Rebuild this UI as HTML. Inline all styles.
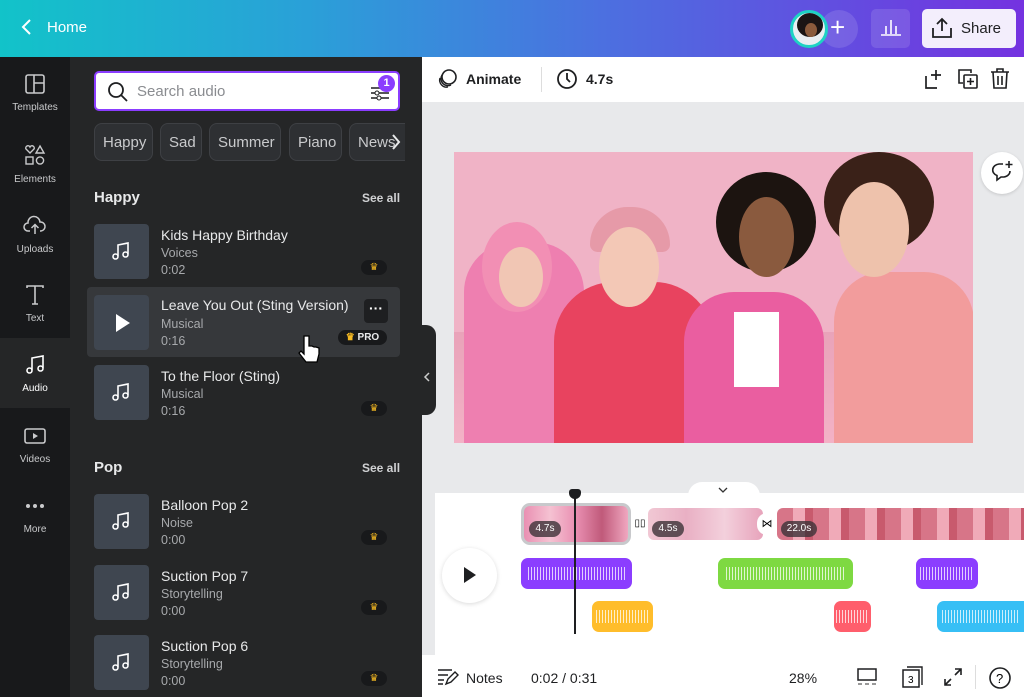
<!DOCTYPE html>
<html><head><meta charset="utf-8"><style>
*{margin:0;padding:0;box-sizing:border-box}
body{width:1024px;height:697px;overflow:hidden;font-family:"Liberation Sans",sans-serif;background:#e8e9eb;position:relative}
.abs{position:absolute}
#hdr{left:0;top:0;width:1024px;height:57px;background:linear-gradient(90deg,#12c3c9 0%,#2aa0d8 30%,#4d6ee0 60%,#7432e0 100%)}
#side{left:0;top:57px;width:70px;height:640px;background:#18191b}
.si{position:absolute;left:0;width:70px;height:70px;color:#c9cacc;font-size:10px;text-align:center}
.si svg{display:block;margin:17px auto 8px}
#panel{left:70px;top:57px;width:352px;height:640px;background:#252627}
.chip{position:absolute;top:123px;height:38px;border:1px solid #3e4044;background:#2e3033;border-radius:8px;color:#c9cacc;font-size:15px;line-height:38px;padding:0 8px}
.thumb{position:absolute;left:94px;width:55px;height:55px;background:#3f4650;border-radius:4px}
.t1{position:absolute;left:161px;color:#e8e9ea;font-size:14px}
.t2{position:absolute;left:161px;color:#a7a9ac;font-size:12.5px}
.crown{position:absolute;left:361px;width:26px;height:15px;border-radius:8px;background:#18191b;color:#f5b922;font-size:10px;text-align:center;line-height:15px}
.sec{position:absolute;left:94px;color:#e8e9ea;font-weight:bold;font-size:15px}
.see{position:absolute;left:362px;color:#d0d1d3;font-weight:bold;font-size:12px}
.trk{position:absolute;border-radius:7px;overflow:hidden}
.trk::after{content:"";position:absolute;left:6%;right:6%;top:30%;bottom:30%;background:repeating-linear-gradient(90deg,rgba(255,255,255,.75) 0 1px,transparent 1px 3px)}
.bb{position:absolute;top:670px;font-size:14px;color:#1e1f21}
</style></head><body>
<div id="hdr" class="abs">
 <svg class="abs" style="left:20px;top:18px" width="14" height="18"><path d="M10 2L3 9l7 7" stroke="#fff" stroke-width="2" fill="none"/></svg>
 <div class="abs" style="left:47px;top:19px;color:#fff;font-size:15px">Home</div>
 <div class="abs" style="left:820px;top:10px;width:38px;height:38px;border-radius:50%;background:rgba(255,255,255,.12)"></div>
 <div class="abs" style="left:790px;top:10px;width:38px;height:38px;border-radius:50%;background:#e9eef2;border:3px solid #1ed2c4;overflow:hidden"><div style="position:absolute;left:4px;top:0;width:26px;height:24px;border-radius:50%;background:#1a1414"></div><div style="position:absolute;left:12px;top:10px;width:12px;height:14px;border-radius:50%;background:#8a5a3c"></div></div>
 <div class="abs" style="left:830px;top:12px;color:#fff;font-size:26px;line-height:30px">+</div>
 <div class="abs" style="left:871px;top:9px;width:39px;height:39px;border-radius:5px;background:rgba(255,255,255,.12)"></div>
 <svg class="abs" style="left:880px;top:17px" width="22" height="20"><path d="M1 18h20M6 17V9M11 17V3M16 17V9" stroke="#fff" stroke-width="1.6"/></svg>
 <div class="abs" style="left:922px;top:9px;width:94px;height:39px;border-radius:5px;background:#f3eefc"></div>
 <svg class="abs" style="left:931px;top:17px" width="22" height="22"><path d="M11 14V2M6 7l5-5 5 5M2 11v9h18v-9" stroke="#1e1f21" stroke-width="1.8" fill="none"/></svg>
 <div class="abs" style="left:961px;top:20px;color:#1e1f21;font-size:15px">Share</div>
</div>
<div id="side" class="abs">
 <div class="si" style="top:0"><svg width="20" height="20"><rect x="1" y="1" width="18" height="18" rx="2" fill="none" stroke="#c9cacc" stroke-width="1.6"/><path d="M9 1v18M9 9h10" stroke="#c9cacc" stroke-width="1.6"/></svg>Templates</div>
 <div class="si" style="top:70px"><svg width="22" height="22"><path d="M6 9L2 5a2 2 0 014-2 2 2 0 014 2z" fill="none" stroke="#c9cacc" stroke-width="1.4"/><path d="M16 2l4 7h-8z" fill="none" stroke="#c9cacc" stroke-width="1.4"/><rect x="2" y="13" width="7" height="7" fill="none" stroke="#c9cacc" stroke-width="1.4"/><circle cx="16" cy="16.5" r="3.6" fill="none" stroke="#c9cacc" stroke-width="1.4"/></svg>Elements</div>
 <div class="si" style="top:140px"><svg width="24" height="22"><path d="M7 17H5a4 4 0 010-8 6 6 0 0112-1 4.5 4.5 0 011 9h-1M12 20v-9M8.5 14l3.5-3.5 3.5 3.5" fill="none" stroke="#c9cacc" stroke-width="1.5"/></svg>Uploads</div>
 <div class="si" style="top:211px"><svg width="20" height="20"><path d="M2 3V1h16v2M10 1v18M7 19h6" fill="none" stroke="#c9cacc" stroke-width="1.6"/></svg>Text</div>
 <div class="si" style="top:281px;background:#252627;color:#fff"><svg width="20" height="20"><path d="M7 15V3l11-2v12" fill="none" stroke="#fff" stroke-width="1.6"/><circle cx="4.5" cy="15.5" r="2.5" fill="none" stroke="#fff" stroke-width="1.6"/><circle cx="15.5" cy="13.5" r="2.5" fill="none" stroke="#fff" stroke-width="1.6"/></svg>Audio</div>
 <div class="si" style="top:352px"><svg width="22" height="20"><rect x="1" y="3" width="20" height="14" rx="2" fill="none" stroke="#c9cacc" stroke-width="1.6"/><path d="M9 7v6l5-3z" fill="#c9cacc"/></svg>Videos</div>
 <div class="si" style="top:422px"><svg width="22" height="20"><circle cx="4" cy="10" r="2" fill="#c9cacc"/><circle cx="11" cy="10" r="2" fill="#c9cacc"/><circle cx="18" cy="10" r="2" fill="#c9cacc"/></svg>More</div>
</div>
<div id="panel" class="abs"></div>
<div class="abs" style="left:94px;top:71px;width:306px;height:40px;background:#fff;border:2px solid #8b3dff;border-radius:5px"></div>
<svg class="abs" style="left:107px;top:81px" width="22" height="22"><circle cx="9" cy="9" r="7" fill="none" stroke="#1e1f21" stroke-width="1.8"/><path d="M14 14l6 6" stroke="#1e1f21" stroke-width="1.8"/></svg>
<div class="abs" style="left:137px;top:83px;color:#8a8c90;font-size:15px">Search audio</div>
<svg class="abs" style="left:370px;top:80px" width="20" height="22"><path d="M1 8h18M1 13h18M1 18h18" stroke="#1e1f21" stroke-width="1.4"/><circle cx="13" cy="8" r="2" fill="#fff" stroke="#1e1f21"/><circle cx="7" cy="13" r="2" fill="#fff" stroke="#1e1f21"/><circle cx="9" cy="18" r="2" fill="#fff" stroke="#1e1f21"/></svg>
<div class="abs" style="left:378px;top:75px;width:17px;height:17px;border-radius:50%;background:#8b3dff;color:#fff;font-size:11px;text-align:center;line-height:17px;font-weight:bold">1</div>
<div class="chip" style="left:94px;width:59px">Happy</div>
<div class="chip" style="left:160px;width:42px">Sad</div>
<div class="chip" style="left:209px;width:72px">Summer</div>
<div class="chip" style="left:289px;width:53px">Piano</div>
<div class="chip" style="left:349px;width:56px;border-right:none;border-radius:8px 0 0 8px">News</div>
<svg class="abs" style="left:391px;top:133px" width="10" height="18"><path d="M2 2l6 7-6 7" stroke="#e8e9ea" stroke-width="2" fill="none"/></svg>
<div class="sec" style="top:189px">Happy</div><div class="see" style="top:191px">See all</div>
<div class="abs" style="left:87px;top:287px;width:313px;height:70px;background:#36383b;border-radius:4px"></div>
<div class="thumb" style="top:224px"></div><div class="thumb" style="top:295px"></div><div class="thumb" style="top:365px"></div>
<div class="t1" style="top:227px">Kids Happy Birthday</div><div class="t2" style="top:246px">Voices</div><div class="t2" style="top:263px">0:02</div>
<div class="t1" style="top:297px">Leave You Out (Sting Version)</div><div class="t2" style="top:317px">Musical</div><div class="t2" style="top:334px">0:16</div>
<div class="t1" style="top:368px">To the Floor (Sting)</div><div class="t2" style="top:387px">Musical</div><div class="t2" style="top:404px">0:16</div>
<div class="crown" style="top:260px">♛</div><div class="crown" style="top:401px">♛</div>
<div class="crown" style="top:330px;left:338px;width:49px;color:#e8e9ea;font-weight:bold"><span style="color:#f5b922">♛</span> PRO</div>
<div class="abs" style="left:364px;top:299px;width:24px;height:24px;background:#1e1f21;border-radius:4px;color:#fff;text-align:center;font-size:14px;line-height:18px;font-weight:bold">···</div>
<div class="sec" style="top:459px">Pop</div><div class="see" style="top:461px">See all</div>
<div class="thumb" style="top:494px"></div><div class="thumb" style="top:565px"></div><div class="thumb" style="top:635px"></div>
<div class="t1" style="top:497px">Balloon Pop 2</div><div class="t2" style="top:516px">Noise</div><div class="t2" style="top:533px">0:00</div>
<div class="t1" style="top:568px">Suction Pop 7</div><div class="t2" style="top:587px">Storytelling</div><div class="t2" style="top:604px">0:00</div>
<div class="t1" style="top:638px">Suction Pop 6</div><div class="t2" style="top:657px">Storytelling</div><div class="t2" style="top:674px">0:00</div>
<div class="crown" style="top:530px">♛</div><div class="crown" style="top:600px">♛</div><div class="crown" style="top:671px">♛</div>
<svg class="abs" style="left:110px;top:240px" width="22" height="22"><path d="M8 16V5l10-2v11" fill="none" stroke="#fff" stroke-width="1.6"/><circle cx="5.5" cy="16.5" r="2.5" fill="none" stroke="#fff" stroke-width="1.6"/><circle cx="15.5" cy="14.5" r="2.5" fill="none" stroke="#fff" stroke-width="1.6"/></svg>
<svg class="abs" style="left:114px;top:313px" width="18" height="20"><path d="M2 1l14 9-14 9z" fill="#fff"/></svg>
<svg class="abs" style="left:110px;top:381px" width="22" height="22"><path d="M8 16V5l10-2v11" fill="none" stroke="#fff" stroke-width="1.6"/><circle cx="5.5" cy="16.5" r="2.5" fill="none" stroke="#fff" stroke-width="1.6"/><circle cx="15.5" cy="14.5" r="2.5" fill="none" stroke="#fff" stroke-width="1.6"/></svg>
<svg class="abs" style="left:110px;top:510px" width="22" height="22"><path d="M8 16V5l10-2v11" fill="none" stroke="#fff" stroke-width="1.6"/><circle cx="5.5" cy="16.5" r="2.5" fill="none" stroke="#fff" stroke-width="1.6"/><circle cx="15.5" cy="14.5" r="2.5" fill="none" stroke="#fff" stroke-width="1.6"/></svg>
<svg class="abs" style="left:110px;top:581px" width="22" height="22"><path d="M8 16V5l10-2v11" fill="none" stroke="#fff" stroke-width="1.6"/><circle cx="5.5" cy="16.5" r="2.5" fill="none" stroke="#fff" stroke-width="1.6"/><circle cx="15.5" cy="14.5" r="2.5" fill="none" stroke="#fff" stroke-width="1.6"/></svg>
<svg class="abs" style="left:110px;top:651px" width="22" height="22"><path d="M8 16V5l10-2v11" fill="none" stroke="#fff" stroke-width="1.6"/><circle cx="5.5" cy="16.5" r="2.5" fill="none" stroke="#fff" stroke-width="1.6"/><circle cx="15.5" cy="14.5" r="2.5" fill="none" stroke="#fff" stroke-width="1.6"/></svg>
<svg class="abs" style="left:296px;top:334px" width="26" height="32"><path d="M8 2v18l-3-3-2 2 7 9h11l2-8v-6l-3-1-2 0-2-1-3 0V2z" fill="#fff" stroke="#000" stroke-width="1.3"/></svg>
<div class="abs" style="left:422px;top:325px;width:14px;height:90px;background:#252627;border-radius:0 10px 10px 0"></div>
<svg class="abs" style="left:423px;top:371px" width="8" height="12"><path d="M6 2L2 6l4 4" stroke="#ccc" stroke-width="1.5" fill="none"/></svg>
<div class="abs" style="left:422px;top:57px;width:602px;height:45px;background:#fff"></div>
<svg class="abs" style="left:437px;top:68px" width="22" height="22"><circle cx="12" cy="9" r="7" fill="none" stroke="#1e1f21" stroke-width="1.6"/><path d="M5 7a7 7 0 009 10M3 10a7 7 0 008 9" fill="none" stroke="#1e1f21" stroke-width="1.4"/></svg>
<div class="abs" style="left:466px;top:71px;font-size:14px;font-weight:bold;color:#1e1f21">Animate</div>
<div class="abs" style="left:541px;top:67px;width:1px;height:25px;background:#ddd"></div>
<svg class="abs" style="left:556px;top:68px" width="22" height="22"><circle cx="11" cy="11" r="9" fill="none" stroke="#1e1f21" stroke-width="1.8"/><path d="M11 5v6l3 3" stroke="#1e1f21" stroke-width="1.8" fill="none"/></svg>
<div class="abs" style="left:586px;top:71px;font-size:14px;font-weight:bold;color:#1e1f21">4.7s</div>
<svg class="abs" style="left:924px;top:68px" width="20" height="22"><path d="M13 20H2V8M12 2v10M7 7h10" stroke="#1e1f21" stroke-width="1.7" fill="none"/></svg>
<svg class="abs" style="left:957px;top:68px" width="22" height="22"><path d="M14 5V2H2v13h4" stroke="#1e1f21" stroke-width="1.6" fill="none"/><rect x="7" y="7" width="13" height="13" rx="1" fill="none" stroke="#1e1f21" stroke-width="1.6"/><path d="M13.5 10v7M10 13.5h7" stroke="#1e1f21" stroke-width="1.6"/></svg>
<svg class="abs" style="left:990px;top:68px" width="20" height="22"><path d="M1 4h18M7 4V1h6v3M3 4l1 16h12l1-16M8 8v9M12 8v9" stroke="#1e1f21" stroke-width="1.6" fill="none"/></svg>
<div class="abs" style="left:454px;top:152px;width:519px;height:291px;background:#f0b3c6;overflow:hidden">
 <div class="abs" style="left:0;top:180px;width:519px;height:111px;background:linear-gradient(#e9a3b9,#f3b2c6)"></div>
 <div class="abs" style="left:10px;top:90px;width:120px;height:230px;border-radius:50px 50px 0 0;background:#ee7fb0"></div>
 <div class="abs" style="left:28px;top:70px;width:70px;height:90px;border-radius:50%;background:#f28fb4"></div>
 <div class="abs" style="left:45px;top:95px;width:44px;height:60px;border-radius:50%;background:#f1c6b4"></div>
 <div class="abs" style="left:100px;top:130px;width:160px;height:170px;border-radius:60px 60px 0 0;background:#e8435f"></div>
 <div class="abs" style="left:136px;top:55px;width:80px;height:45px;border-radius:40px 40px 8px 8px;background:#e69aa8"></div>
 <div class="abs" style="left:145px;top:75px;width:60px;height:80px;border-radius:50%;background:#f3c8b6"></div>
 <div class="abs" style="left:230px;top:140px;width:140px;height:160px;border-radius:50px 50px 0 0;background:#ea5ea0"></div>
 <div class="abs" style="left:280px;top:160px;width:45px;height:75px;background:#fff"></div>
 <div class="abs" style="left:262px;top:20px;width:100px;height:100px;border-radius:50%;background:#1c1410"></div>
 <div class="abs" style="left:285px;top:45px;width:55px;height:80px;border-radius:50%;background:#8a5a3e"></div>
 <div class="abs" style="left:380px;top:120px;width:140px;height:180px;border-radius:50px 50px 0 0;background:#f29c9c"></div>
 <div class="abs" style="left:370px;top:0;width:110px;height:100px;border-radius:50%;background:#3a2118"></div>
 <div class="abs" style="left:385px;top:30px;width:70px;height:95px;border-radius:50%;background:#eec2ac"></div>
</div>
<div class="abs" style="left:981px;top:152px;width:42px;height:42px;border-radius:50%;background:#fff;box-shadow:0 1px 3px rgba(0,0,0,.15)"></div>
<svg class="abs" style="left:990px;top:160px" width="24" height="24"><path d="M13 4H9a7 6 0 00-2 11.5V20l4-3h3a7 6 0 006-6" fill="none" stroke="#1e1f21" stroke-width="1.6"/><path d="M19 1v7M15.5 4.5h7" stroke="#1e1f21" stroke-width="1.6"/></svg>
<div class="abs" style="left:435px;top:493px;width:589px;height:162px;background:#fff"></div>
<div class="abs" style="left:688px;top:482px;width:72px;height:14px;background:#fff;border-radius:14px 14px 0 0"></div>
<svg class="abs" style="left:718px;top:487px" width="10" height="6"><path d="M1 1l4 4 4-4" stroke="#333" stroke-width="1.3" fill="none"/></svg>
<div class="abs" style="left:422px;top:655px;width:602px;height:42px;background:#fff"></div>
<div class="abs" style="left:521px;top:503px;width:110px;height:42px;border:3px solid #c8c9cc;border-radius:9px;background:linear-gradient(90deg,#e98fb2,#f5c2d2,#e98fb2,#c05a7a,#f0a7c0)"></div>
<div class="abs" style="left:648px;top:508px;width:115px;height:32px;border-radius:6px;background:linear-gradient(90deg,#f1c8d4,#e9b0c4,#f3d0dc,#e7a3bb)"></div>
<div class="abs" style="left:777px;top:508px;width:247px;height:32px;border-radius:6px 0 0 6px;background:repeating-linear-gradient(90deg,#d77588 0 16px,#f0aab8 16px 28px,#c85a6d 28px 36px)"></div>
<div class="abs" style="left:529px;top:521px;width:32px;height:16px;border-radius:8px;background:rgba(60,50,55,.8);color:#fff;font-size:10px;text-align:center;line-height:16px">4.7s</div>
<div class="abs" style="left:652px;top:521px;width:32px;height:16px;border-radius:8px;background:rgba(60,50,55,.8);color:#fff;font-size:10px;text-align:center;line-height:16px">4.5s</div>
<div class="abs" style="left:781px;top:521px;width:36px;height:16px;border-radius:8px;background:rgba(60,50,55,.8);color:#fff;font-size:10px;text-align:center;line-height:16px">22.0s</div>
<div class="abs" style="left:632px;top:513px;width:16px;height:22px;background:#fff;border-radius:8px;font-size:10px;text-align:center;line-height:22px">▯▯</div>
<div class="abs" style="left:757px;top:513px;width:20px;height:22px;background:#fff;border-radius:10px;font-size:11px;text-align:center;line-height:22px">⋈</div>
<div class="trk" style="left:521px;top:558px;width:111px;height:31px;background:#8b3dff"></div>
<div class="trk" style="left:718px;top:558px;width:135px;height:31px;background:#7ed942"></div>
<div class="trk" style="left:916px;top:558px;width:62px;height:31px;background:#8b3dff"></div>
<div class="trk" style="left:592px;top:601px;width:61px;height:31px;background:#ffbd2b"></div>
<div class="trk" style="left:834px;top:601px;width:37px;height:31px;background:#ff5e6c"></div>
<div class="trk" style="left:937px;top:601px;width:87px;height:31px;background:#37bff5;border-radius:7px 0 0 7px"></div>
<div class="abs" style="left:574px;top:497px;width:2px;height:137px;background:#1e1f21"></div>
<div class="abs" style="left:569px;top:489px;width:12px;height:10px;background:#1e1f21;border-radius:3px 3px 6px 6px"></div>
<div class="abs" style="left:442px;top:548px;width:55px;height:55px;border-radius:50%;background:#fff;box-shadow:0 1px 5px rgba(0,0,0,.15)"></div>
<svg class="abs" style="left:462px;top:566px" width="16" height="18"><path d="M2 1l12 8-12 8z" fill="#1e1f21"/></svg>
<svg class="abs" style="left:437px;top:668px" width="22" height="18"><path d="M1 2h14M1 7h10M1 12h6M1 16h5M9 16l2-5 7-7 3 3-7 7z" stroke="#1e1f21" stroke-width="1.4" fill="none"/></svg>
<div class="bb" style="left:466px">Notes</div>
<div class="bb" style="left:531px">0:02 / 0:31</div>
<div class="bb" style="left:789px">28%</div>
<svg class="abs" style="left:857px;top:668px" width="20" height="20"><rect x="1" y="1" width="18" height="11" fill="none" stroke="#1e1f21" stroke-width="1.5"/><path d="M1 16h4M8 16h4M15 16h4" stroke="#999" stroke-width="2"/></svg>
<svg class="abs" style="left:901px;top:665px" width="24" height="24"><path d="M6 2h15v18" fill="none" stroke="#1e1f21" stroke-width="1.4"/><rect x="2" y="5" width="16" height="17" fill="none" stroke="#1e1f21" stroke-width="1.5"/><text x="7" y="18" font-size="10" font-family="Liberation Sans">3</text></svg>
<svg class="abs" style="left:943px;top:667px" width="20" height="20"><path d="M12 2h6v6M18 2l-6 6M8 18H2v-6M2 18l6-6" stroke="#1e1f21" stroke-width="1.6" fill="none"/></svg>
<div class="abs" style="left:975px;top:665px;width:1px;height:24px;background:#ddd"></div>
<svg class="abs" style="left:988px;top:666px" width="24" height="24"><circle cx="12" cy="12" r="10" fill="none" stroke="#1e1f21" stroke-width="1.6"/><text x="8" y="17" font-size="13" font-family="Liberation Sans">?</text></svg>
</body></html>
